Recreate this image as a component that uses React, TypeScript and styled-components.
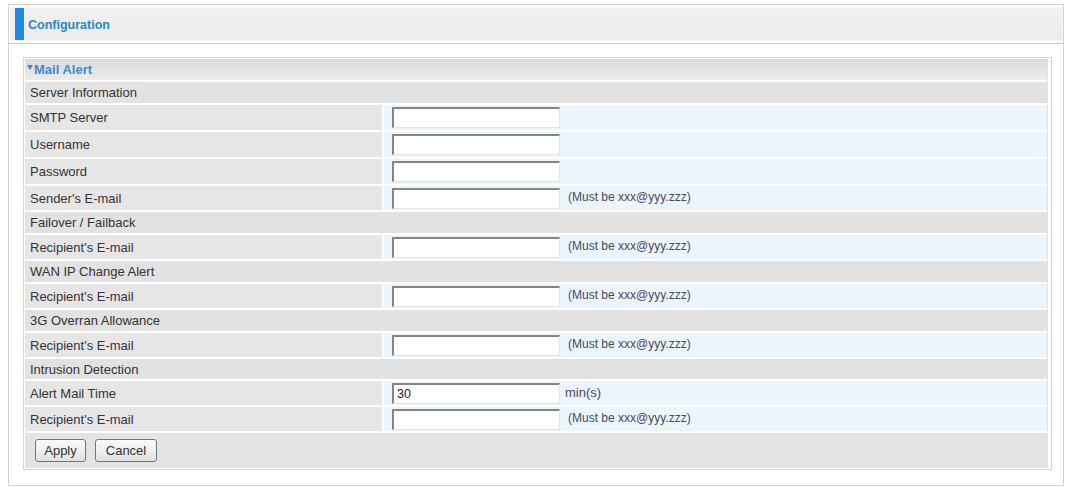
import React from "react";
import styled, { createGlobalStyle } from "styled-components";

const Global = createGlobalStyle`
  html, body { margin: 0; padding: 0; background: #ffffff; }
  body { font-family: "Liberation Sans", Arial, sans-serif; font-size: 13px; color: #333; }
`;

const Frame = styled.div`
  box-sizing: border-box;
  width: 1056px;
  margin: 4px 0 0 8px;
  border: 1px solid #d2d2d2;
  padding-bottom: 15px;
  background: #fff;
`;

const HeaderWrap = styled.div`
  padding: 2px 0 2px 1px;
  border-bottom: 1px solid #cdcdcd;
`;

const HeaderBar = styled.div`
  box-sizing: border-box;
  height: 34px;
  display: flex;
  align-items: center;
  background: linear-gradient(#f0f0f0, #ececec);
  border: 1px solid #f6f6f6;
`;

const Accent = styled.div`
  width: 9px;
  height: 32px;
  margin-left: 4px;
  background: #1b8be3;
`;

const HeaderTitle = styled.span`
  margin-left: 4px;
  margin-top: 1px;
  color: #2a86c8;
  font-weight: bold;
  font-size: 12.5px;
`;

const Panel = styled.div`
  box-sizing: border-box;
  width: 1029px;
  margin: 13px 0 0 14px;
  border: 1px solid #d6d6d6;
  padding: 1px 4px 1px 1px;
`;

const Table = styled.div`
  display: flex;
  flex-direction: column;
  gap: 2px;
  width: 1022px;
  border-right: 1px solid #e2e2e2;
`;

const PanelTitle = styled.div`
  height: 21px;
  display: flex;
  align-items: center;
  padding-left: 2px;
  background: linear-gradient(#dadada, #ececec);
  color: #3a8ad6;
  font-weight: bold;
  font-size: 13px;
`;

const Caret = styled.span`
  display: inline-block;
  width: 0;
  height: 0;
  border-left: 3px solid transparent;
  border-right: 3px solid transparent;
  border-top: 5px solid #3a8ad6;
  margin: 0 1px 5px 0;
`;

const SectionRow = styled.div<{ $h?: number }>`
  height: ${(p) => p.$h ?? 21}px;
  display: flex;
  align-items: center;
  padding-left: 5px;
  background: #e2e2e2;
  color: #333;
`;

const FieldRow = styled.div<{ $h?: number }>`
  height: ${(p) => p.$h ?? 24}px;
  display: grid;
  grid-template-columns: 357px 1fr;
  column-gap: 2px;
`;

const LabelCell = styled.div`
  display: flex;
  align-items: center;
  padding-left: 5px;
  background: #e6e6e6;
  color: #363236;
`;

const ValueCell = styled.div`
  display: flex;
  align-items: center;
  padding-left: 8px;
  background: #ebf5fe;
`;

const TextInput = styled.input`
  box-sizing: border-box;
  width: 168px;
  height: 21px;
  margin: 0;
  padding: 1px 3px 0;
  border-style: solid;
  border-width: 2px 1px 1px 2px;
  border-color: #858585 #e4e4e4 #e4e4e4 #858585;
  background: #fff;
  font-family: "Liberation Sans", Arial, sans-serif;
  font-size: 12.5px;
  color: #222;
  outline: none;
`;

const Note = styled.span<{ $ml?: number; $fs?: number }>`
  margin-left: ${(p) => p.$ml ?? 8}px;
  margin-bottom: 2px;
  color: #4d4760;
  font-size: ${(p) => p.$fs ?? 12}px;
`;

const ButtonRow = styled.div`
  height: 35px;
  display: flex;
  align-items: center;
  gap: 9px;
  padding-left: 10px;
  background: #e3e3e3;
`;

const Button = styled.button<{ $w: number }>`
  box-sizing: border-box;
  width: ${(p) => p.$w}px;
  height: 23px;
  padding: 0;
  border: 1px solid #687888;
  border-radius: 3px;
  background: linear-gradient(#fbfbfb, #e2e2e2);
  font-family: "Liberation Sans", Arial, sans-serif;
  font-size: 13px;
  color: #333;
`;

type Field = {
  kind: "field";
  label: string;
  value?: string;
  note?: string;
  noteMl?: number;
  noteFs?: number;
  h?: number;
};
type Section = { kind: "section"; label: string; h?: number };

const MUST = "(Must be xxx@yyy.zzz)";

const rows: (Field | Section)[] = [
  { kind: "section", label: "Server Information" },
  { kind: "field", label: "SMTP Server", h: 25 },
  { kind: "field", label: "Username", h: 25 },
  { kind: "field", label: "Password", h: 25 },
  { kind: "field", label: "Sender's E-mail", note: MUST },
  { kind: "section", label: "Failover / Failback" },
  { kind: "field", label: "Recipient's E-mail", note: MUST },
  { kind: "section", label: "WAN IP Change Alert" },
  { kind: "field", label: "Recipient's E-mail", note: MUST },
  { kind: "section", label: "3G Overran Allowance" },
  { kind: "field", label: "Recipient's E-mail", note: MUST },
  { kind: "section", label: "Intrusion Detection", h: 20 },
  { kind: "field", label: "Alert Mail Time", value: "30", note: "min(s)", noteMl: 5, noteFs: 13 },
  { kind: "field", label: "Recipient's E-mail", note: MUST },
];

export default function App() {
  return (
    <>
      <Global />
      <Frame>
        <HeaderWrap>
          <HeaderBar>
            <Accent />
            <HeaderTitle>Configuration</HeaderTitle>
          </HeaderBar>
        </HeaderWrap>
        <Panel>
          <Table>
            <PanelTitle>
              <Caret />
              Mail Alert
            </PanelTitle>
            {rows.map((r, i) =>
              r.kind === "section" ? (
                <SectionRow key={i} $h={r.h}>
                  {r.label}
                </SectionRow>
              ) : (
                <FieldRow key={i} $h={r.h}>
                  <LabelCell>{r.label}</LabelCell>
                  <ValueCell>
                    <TextInput type="text" defaultValue={r.value ?? ""} />
                    {r.note && (
                      <Note $ml={r.noteMl} $fs={r.noteFs}>
                        {r.note}
                      </Note>
                    )}
                  </ValueCell>
                </FieldRow>
              )
            )}
            <ButtonRow>
              <Button $w={51}>Apply</Button>
              <Button $w={62}>Cancel</Button>
            </ButtonRow>
          </Table>
        </Panel>
      </Frame>
    </>
  );
}
